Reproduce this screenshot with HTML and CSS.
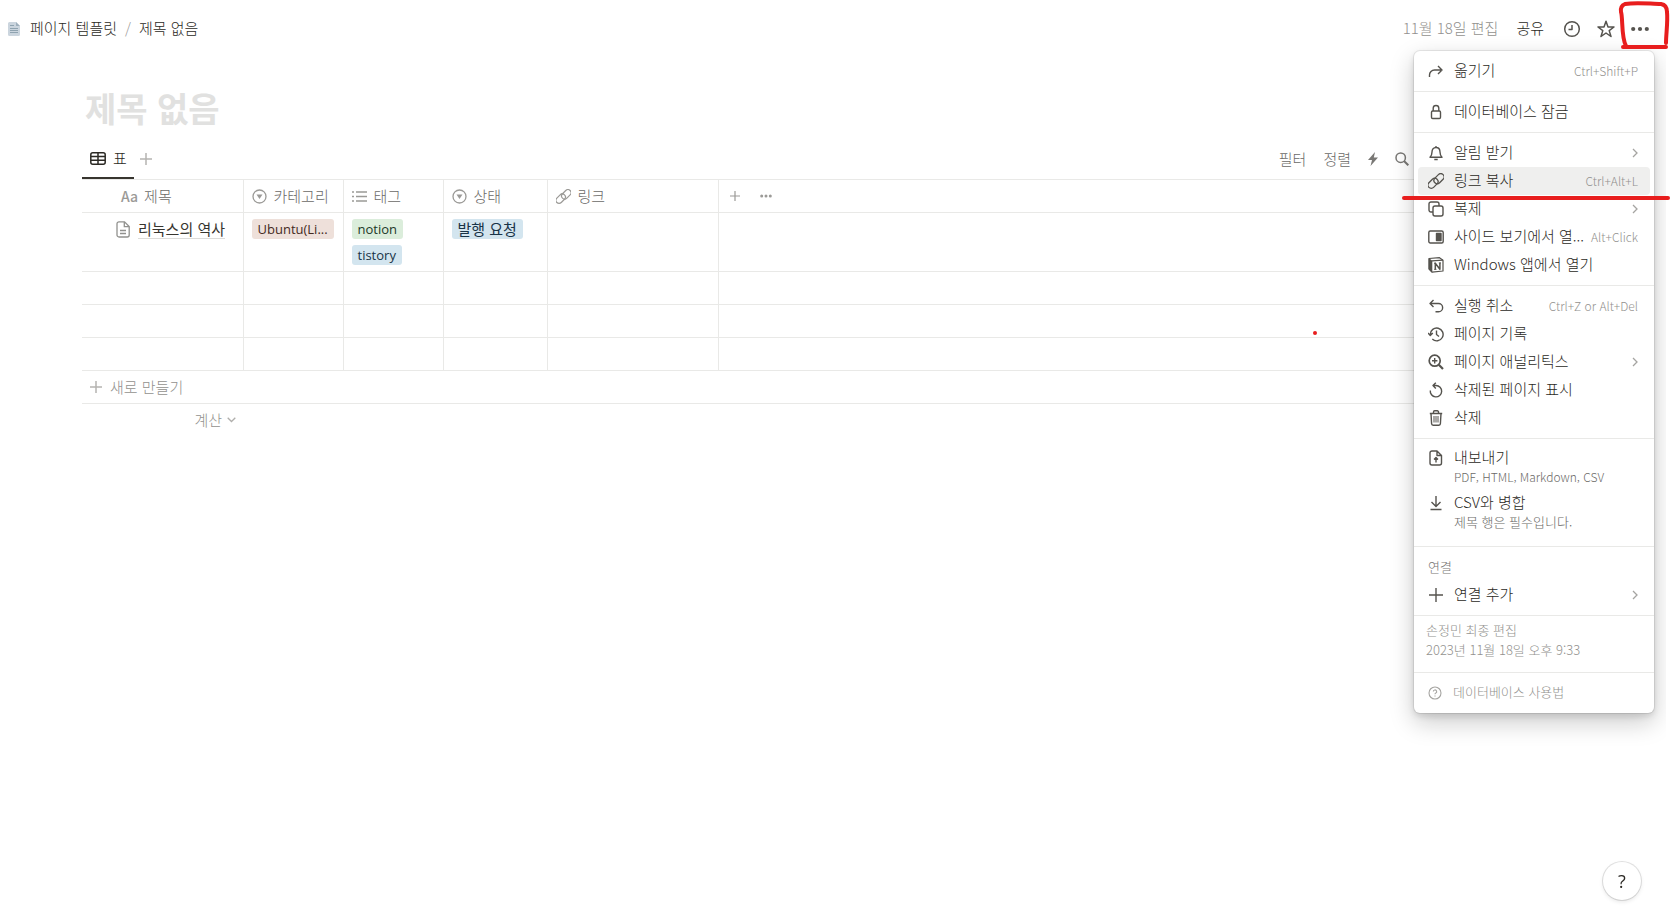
FILE: index.html
```html
<!DOCTYPE html>
<html lang="ko">
<head>
<meta charset="utf-8">
<title>제목 없음</title>
<link rel="stylesheet" href="styles.css">
</head>
<body>
<div class="app">
  <header class="topbar">
    <nav class="crumbs">
      <svg class="page-icon" width="12" height="14" viewBox="0 0 12 14"><path d="M1.500 0H8l4 4v8.500a1.500 1.500 0 0 1-1.500 1.500h-9A1.500 1.500 0 0 1 0 12.500v-11A1.500 1.500 0 0 1 1.500 0z" fill="#cbd5de"/><path d="M8 0v4h4z" fill="#9fb0bd"/><path d="M2 3.500h4M2 6.500h8M2 8.500h8M2 10.500h8" stroke="#8fa3b0"/></svg>
      <a href="#">페이지 템플릿</a><span class="slash">/</span><a href="#">제목 없음</a>
    </nav>
    <div class="actions">
      <span class="edited">11월 18일 편집</span>
      <button class="share">공유</button>
      <button aria-label="업데이트"><svg width="18" height="18" viewBox="0 0 18 18" class="line"><circle cx="9" cy="9" r="7.300"/><path d="M9 5v4.500H5.500"/></svg></button>
      <button aria-label="즐겨찾기"><svg width="18" height="18" viewBox="0 0 18 18" class="line"><path d="M9 1.300l2 5.600 6 .1-4.800 3.600 1.800 5.900L9 13l-5 3.500 1.800-5.900L1 7l6-.1z"/></svg></button>
      <button aria-label="더 보기"><svg width="18" height="18" viewBox="0 0 18 18"><g fill="#55534e"><circle cx="2.200" cy="9" r="2.100"/><circle cx="9" cy="9" r="2.100"/><circle cx="15.800" cy="9" r="2.100"/></g></svg></button>
    </div>
  </header>

  <main class="content">
    <h1>제목 없음</h1>
    <div class="viewbar">
      <button class="tab"><svg width="16" height="13" viewBox="0 0 16 13" class="line"><rect x=".8" y=".8" width="14.400" height="11.400" rx="2"/><path d="M1 4.500h14M1 8.300h14M8 1v11"/></svg>표</button>
      <button class="add-view" aria-label="보기 추가"><svg width="12" height="12" viewBox="0 0 12 12"><path d="M6 0v12M0 6h12" stroke="#b5b4b1" stroke-width="1.500"/></svg></button>
      <div class="tools">
        <button>필터</button>
        <button>정렬</button>
        <button aria-label="자동화"><svg width="10" height="14" viewBox="0 0 10 14"><path d="M7 0L0 8h4L2.500 14 10 5.500H5.800z" fill="#787774"/></svg></button>
        <button aria-label="검색"><svg width="14" height="14" viewBox="0 0 14 14"><circle cx="5.700" cy="5.700" r="4.700" fill="none" stroke="#787774" stroke-width="1.500"/><path d="M9 9l4.300 4.300" stroke="#787774" stroke-width="2"/></svg></button>
      </div>
    </div>

    <table class="grid">
      <colgroup><col class="c-title"><col class="c-cat"><col class="c-tag"><col class="c-state"><col class="c-link"><col></colgroup>
      <thead>
        <tr>
          <th class="title-head"><div class="head"><span class="aa">Aa</span>제목</div></th>
          <th><div class="head"><svg width="15" height="15" viewBox="0 0 15 15"><circle cx="7.500" cy="7.500" r="6.500" fill="none" stroke="#9b9a97" stroke-width="1.300"/><path d="M4.500 5.500h6l-3 4.500z" fill="#9b9a97"/></svg>카테고리</div></th>
          <th><div class="head"><svg width="15" height="15" viewBox="0 0 15 15" stroke="#9b9a97" stroke-width="1.400"><path d="M0 3h2M0 7.500h2M0 12h2M4 3h11M4 7.500h11M4 12h11"/></svg>태그</div></th>
          <th><div class="head"><svg width="15" height="15" viewBox="0 0 15 15"><circle cx="7.500" cy="7.500" r="6.500" fill="none" stroke="#9b9a97" stroke-width="1.300"/><path d="M4.500 5.500h6l-3 4.500z" fill="#9b9a97"/></svg>상태</div></th>
          <th><div class="head"><svg width="15" height="15" viewBox="0 0 16 16" fill="none" stroke="#9b9a97" stroke-width="1.300"><g transform="rotate(-45 8 8)"><rect x="-1.500" y="4.200" width="11.500" height="6.600" rx="3.300"/><rect x="6" y="5.200" width="11.500" height="6.600" rx="3.300"/></g></svg>링크</div></th>
          <th><div class="head extra"><button aria-label="속성 추가"><svg width="10" height="10" viewBox="0 0 10 10"><path d="M5 0v10M0 5h10" stroke="#9b9a97" stroke-width="1.200"/></svg></button><button aria-label="속성 더 보기"><svg width="12" height="4" viewBox="0 0 12 4" fill="#9b9a97"><circle cx="1.700" cy="2" r="1.500"/><circle cx="6" cy="2" r="1.500"/><circle cx="10.300" cy="2" r="1.500"/></svg></button></div></th>
        </tr>
      </thead>
      <tbody>
        <tr class="filled">
          <td class="name"><div class="doc"><svg width="14" height="17" viewBox="0 0 14 17" fill="none" stroke="#91918e" stroke-width="1.300"><path d="M3 .8h5.500L13.200 5.500V14a2 2 0 0 1-2 2H3a2 2 0 0 1-2-2V2.800a2 2 0 0 1 2-2zM8.300 1v4.700H13M4 9.500h6M4 12.500h6"/></svg><a href="#">리눅스의 역사</a></div></td>
          <td><div class="chips"><span class="chip brown">Ubuntu(Li...</span></div></td>
          <td><div class="chips"><span class="chip green">notion</span><span class="chip blue">tistory</span></div></td>
          <td><div class="chips"><span class="chip blue ko">발행 요청</span></div></td>
          <td></td><td></td>
        </tr>
        <tr><td></td><td></td><td></td><td></td><td></td><td></td></tr>
        <tr><td></td><td></td><td></td><td></td><td></td><td></td></tr>
        <tr><td></td><td></td><td></td><td></td><td></td><td></td></tr>
      </tbody>
    </table>
    <button class="new-row"><svg width="12" height="12" viewBox="0 0 12 12"><path d="M6 0v12M0 6h12" stroke="#b5b4b1" stroke-width="1.500"/></svg>새로 만들기</button>
    <button class="calc">계산<svg width="9" height="6" viewBox="0 0 9 6"><path d="M.7.7l3.800 3.800L8.300.7" fill="none" stroke="#b0afac" stroke-width="1.300"/></svg></button>
  </main>

  <div class="menu">
    <section>
      <button class="item"><svg class="ic" viewBox="0 0 16 16"><path d="M1.500 14v-2A5 5 0 0 1 6.500 7H13M10 3l4 4-4 4"/></svg><span class="label">옮기기</span><kbd>Ctrl+Shift+P</kbd></button>
    </section>
    <section>
      <button class="item"><svg class="ic" viewBox="0 0 16 16"><rect x="3.500" y="7" width="9" height="7.500" rx="1.200"/><path d="M5.200 7V4.300a2.800 2.800 0 0 1 5.600 0V7"/></svg><span class="label">데이터베이스 잠금</span></button>
    </section>
    <section>
      <button class="item"><svg class="ic" viewBox="0 0 16 16"><path d="M2 12.300c1.500-1.500 2-3 2-5.300C4 4.500 5.500 2.500 8 2.500S12 4.500 12 7c0 2.300.5 3.800 2 5.300zM6.300 14.500h3.400M8 1v1.500"/></svg><span class="label">알림 받기</span><svg class="chev" viewBox="0 0 6 10"><path d="M1 1l4 4-4 4"/></svg></button>
      <button class="item active"><svg class="ic" viewBox="0 0 16 16"><g transform="rotate(-45 8 8)" stroke-width="1.300"><rect x="-1.500" y="4.200" width="11.500" height="6.600" rx="3.300"/><rect x="6" y="5.200" width="11.500" height="6.600" rx="3.300"/></g></svg><span class="label">링크 복사</span><kbd>Ctrl+Alt+L</kbd></button>
      <button class="item"><svg class="ic" viewBox="0 0 16 16"><rect x="5" y="5" width="10" height="10" rx="2"/><path d="M5 11H3a2 2 0 0 1-2-2V3a2 2 0 0 1 2-2h6a2 2 0 0 1 2 2v2"/></svg><span class="label">복제</span><svg class="chev" viewBox="0 0 6 10"><path d="M1 1l4 4-4 4"/></svg></button>
      <button class="item"><svg class="ic" viewBox="0 0 16 16"><rect x=".8" y="2" width="14.400" height="12" rx="1.500"/><path d="M8.500 4.500H13v7H8.500z" fill="#55534e"/></svg><span class="label">사이드 보기에서 열...</span><kbd>Alt+Click</kbd></button>
      <button class="item"><svg class="ic" viewBox="0 0 16 16"><path d="M1 1.500l10.500-.8L15 3.200V14l-11 1.200L1 12z" stroke-width="1.200"/><path d="M1 1.500l3 2.300v11.400L1 12z" fill="#55534e" stroke-width=".6"/><path d="M4 3.900l11-.7" stroke-width="1.200"/><path d="M7.300 12.300V6.300l4.600 5.900V5.900" stroke-width="1.500"/><path d="M6 6.200h1.700M10.800 5.900h2.200M6.200 12.400h2.200" stroke-width="1"/></svg><span class="label">Windows 앱에서 열기</span></button>
    </section>
    <section>
      <button class="item"><svg class="ic" viewBox="0 0 16 16"><path d="M5.500 2L2 5.500 5.500 9M2 5.500h8.500a3.800 3.800 0 0 1 0 8.300H7.500"/></svg><span class="label">실행 취소</span><kbd>Ctrl+Z or Alt+Del</kbd></button>
      <button class="item"><svg class="ic" viewBox="0 0 16 16"><path d="M2.300 8.500a6.400 6.400 0 1 1 2 4.600M0 7l2.300 2.500L4.800 7M8.500 4.500v4l2.500 2"/></svg><span class="label">페이지 기록</span></button>
      <button class="item"><svg class="ic" viewBox="0 0 16 16"><circle cx="6.700" cy="6.700" r="5.500" stroke-width="1.700"/><path d="M10.800 10.800L15 15" stroke-width="2.200"/><path d="M6.700 4v5.400M4 6.700h5.400"/></svg><span class="label">페이지 애널리틱스</span><svg class="chev" viewBox="0 0 6 10"><path d="M1 1l4 4-4 4"/></svg></button>
      <button class="item"><svg class="ic" viewBox="0 0 16 16"><path d="M2.300 8.500A5.700 5.700 0 1 0 8 3.500H5M7.800.7L5 3.500l2.800 3"/></svg><span class="label">삭제된 페이지 표시</span></button>
      <button class="item"><svg class="ic" viewBox="0 0 16 16"><path d="M1.800 3.500h12.400M5.500 3.300V2A1.200 1.200 0 0 1 6.700.8h2.600A1.200 1.200 0 0 1 10.500 2v1.300M3 3.500l.6 10.300a1.500 1.500 0 0 0 1.500 1.400h5.800a1.500 1.500 0 0 0 1.500-1.400L13 3.500"/><path d="M6 6v6.500M8 6v6.500M10 6v6.500" stroke-width="1"/></svg><span class="label">삭제</span></button>
    </section>
    <section class="loose">
      <button class="item double"><svg class="ic" viewBox="0 0 16 16"><path d="M4 1h5l4.500 4.500V13a2 2 0 0 1-2 2H4a2 2 0 0 1-2-2V3a2 2 0 0 1 2-2zM9 1v4.500h4.500M8 12.500V7.800M6 9.500l2-2 2 2"/></svg><span class="label">내보내기<small class="latin">PDF, HTML, Markdown, CSV</small></span></button>
      <button class="item double"><svg class="ic" viewBox="0 0 16 16"><path d="M8 1v10M3.500 7L8 11.500 12.500 7M2.500 14.500h11"/></svg><span class="label">CSV와 병합<small>제목 행은 필수입니다.</small></span></button>
    </section>
    <section>
      <h2>연결</h2>
      <button class="item"><svg class="ic" viewBox="0 0 16 16"><path d="M8 1v14M1 8h14"/></svg><span class="label">연결 추가</span><svg class="chev" viewBox="0 0 6 10"><path d="M1 1l4 4-4 4"/></svg></button>
    </section>
    <section class="meta">
      <p>손정민 최종 편집</p>
      <p>2023년 11월 18일 오후 9:33</p>
    </section>
    <section>
      <a class="item guide" href="#"><svg width="14" height="14" viewBox="0 0 14 14" fill="none" stroke="#a5a4a1" stroke-width="1.100"><circle cx="7" cy="7" r="6"/><path d="M5.300 5.600a1.700 1.700 0 1 1 2.500 1.500c-.6.300-.8.600-.8 1.200M7 9.400v1.200"/></svg><span class="label">데이터베이스 사용법</span></a>
    </section>
  </div>
</div>

<button class="help">?</button>

<svg class="mark mark-box" width="50" height="50" viewBox="0 0 50 50"><path d="M7 46C2 37 4 17 2 12Q1 6 6 4C18 2 32 4 42 4Q48 5 48 12C49 22 47 34 47 43M4 47h43"/></svg>
<span class="mark mark-line"></span>
<span class="mark mark-dot"></span>
</body>
</html>
```
FILE: styles.css
```css
* { box-sizing: border-box; }
body {
  margin: 0;
  min-height: 100vh;
  position: relative;
  background: #fff;
  color: #2b2924;
  font: 15px/20px "Noto Sans CJK KR", sans-serif;
  font-weight: 300;
}
button {
  margin: 0; padding: 0; border: 0; background: none;
  font: inherit; color: inherit; cursor: pointer;
  display: flex; align-items: center;
}
a { color: inherit; text-decoration: none; }
svg { display: block; flex: none; }
.line { fill: none; stroke: currentColor; stroke-width: 1.5; stroke-linejoin: round; }

.app { position: relative; min-height: 100vh; margin-right: 7px; overflow: hidden; }
.topbar { display: flex; justify-content: space-between; height: 57px; padding: 0 17px 0 8px; align-items: center; }
.crumbs { display: flex; align-items: center; gap: 8px; }
.crumbs a, .edited, .share { padding-bottom: 2px; }
.crumbs .page-icon { margin-right: 2px; }
.slash { color: #9b9a97; }
.actions { display: flex; align-items: center; gap: 16px; color: #55534e; }
.edited { color: #92918e; }
.share { color: #2b2924; padding-left: 2px; padding-right: 3px; }

.content { padding: 0 82px; }
h1 { margin: 28px 0 0; padding-left: 3px; font-size: 34px; line-height: 46px; font-weight: 700; color: #e1e1e0; }
.viewbar { display: flex; align-items: center; height: 48px; padding-top: 7px; }
.tab { gap: 7px; padding: 0 7px 0 8px; height: 40px; align-self: flex-end; border-bottom: 2px solid #37352f; }
.add-view { margin-left: 6px; }
.tools { display: flex; gap: 17px; margin-left: auto; padding-right: 175px; color: #6b6a67; }

.grid { width: 100%; table-layout: fixed; border-collapse: collapse; }
.c-title { width: 161px; }
.c-cat, .c-tag { width: 100px; }
.c-state { width: 104px; }
.c-link { width: 171px; }
.grid th, .grid td { height: 33px; padding: 0 8px; border: 1px solid #e9e9e7; vertical-align: middle; }
.grid th:first-child, .grid td:first-child { border-left: 0; }
.grid th:last-child, .grid td:last-child { border-right: 0; }
.grid th { font-weight: 300; color: #6b6a67; }
.head { display: flex; align-items: center; gap: 7px; white-space: nowrap; }
.grid .title-head { padding-left: 39px; }
.aa { font: 500 14px/20px "Noto Sans CJK KR", sans-serif; color: #9b9a97; }
.title-head .head { gap: 6px; }
.extra { gap: 20px; padding-left: 3px; }
.grid .filled td { height: 59px; vertical-align: top; padding-top: 6px; }
.grid .name { padding-left: 34px; padding-right: 0; }
.doc { display: flex; align-items: center; gap: 8px; }
.doc a { border-bottom: 1px solid #dcdcda; color: #37352f; font-weight: 400; white-space: nowrap; line-height: 19px; }
.chips { display: flex; flex-wrap: wrap; gap: 6px; }
.chip { height: 20px; padding: 0 6px; border-radius: 3px; font: 13px/20px "Open Sans", sans-serif; white-space: nowrap; }
.chip.ko { font: 15px/20px "Noto Sans CJK KR", sans-serif; }
.brown { background: #eee0da; color: #442a1e; }
.green { background: #dbeddb; color: #1c3829; }
.blue { background: #d3e5ef; color: #183347; }
.new-row { width: 100%; height: 33px; padding-left: 8px; gap: 8px; border-bottom: 1px solid #e9e9e7; color: #92918e; }
.calc { height: 32px; width: 162px; padding-right: 8px; justify-content: flex-end; gap: 5px; color: #92918e; }

.menu {
  position: absolute; top: 51px; right: 12px; width: 240px;
  background: #fff; border-radius: 6px;
  box-shadow: 0 0 0 1px rgba(15,15,15,.08), 0 3px 6px rgba(15,15,15,.12), 0 9px 24px rgba(15,15,15,.22);
}
.menu section { padding: 6px 4px; border-bottom: 1px solid #e9e9e7; }
.menu section:last-child { border-bottom: 0; }
.item { display: flex; align-items: center; width: 100%; height: 28px; padding: 0 12px 0 10px; border-radius: 4px; text-align: left; }
.active { background: #efefee; }
.ic { width: 16px; height: 16px; margin-right: 10px; fill: none; stroke: #55534e; stroke-width: 1.4; stroke-linejoin: round; }
.label { flex: 1; white-space: nowrap; padding-bottom: 2px; }
.item kbd { font: 300 12px/20px "Noto Sans CJK KR", sans-serif; color: #92918e; }
.chev { width: 6px; height: 10px; fill: none; stroke: #a5a4a1; stroke-width: 1.3; }
.menu .loose { padding-bottom: 11px; }
.double { height: 45px; align-items: flex-start; padding-top: 2px; }
.double .ic { margin-top: 3px; }
.double small { display: block; font-size: 13px; line-height: 20px; color: #6b6a67; }
.double .latin { font-size: 12px; }
h2 { margin: 0; padding-left: 10px; font-size: 13px; line-height: 28px; font-weight: 300; color: #787774; }
.menu .meta { padding: 4px 12px 12px; font-size: 13px; color: #92918e; }
.meta p { margin: 0; }
.guide { gap: 11px; font-size: 13px; color: #92918e; }

.help {
  position: fixed; right: 32px; bottom: 15px; width: 38px; height: 38px;
  justify-content: center; border-radius: 50%; background: #fff;
  font: 18px/38px "Open Sans", sans-serif;
  box-shadow: 0 0 0 1px rgba(15,15,15,.12), 0 2px 4px rgba(15,15,15,.1);
}
.mark { position: absolute; pointer-events: none; }
.mark-box { top: 0; right: 4px; fill: none; stroke: #e81e1e; stroke-width: 4; stroke-linecap: round; overflow: visible; }
.mark-line { top: 196px; right: 3px; width: 268px; height: 4px; border-radius: 2px; background: #e81e1e; }
.mark-dot { top: 331px; right: 356px; width: 4px; height: 4px; border-radius: 50%; background: #e81e1e; }
```
